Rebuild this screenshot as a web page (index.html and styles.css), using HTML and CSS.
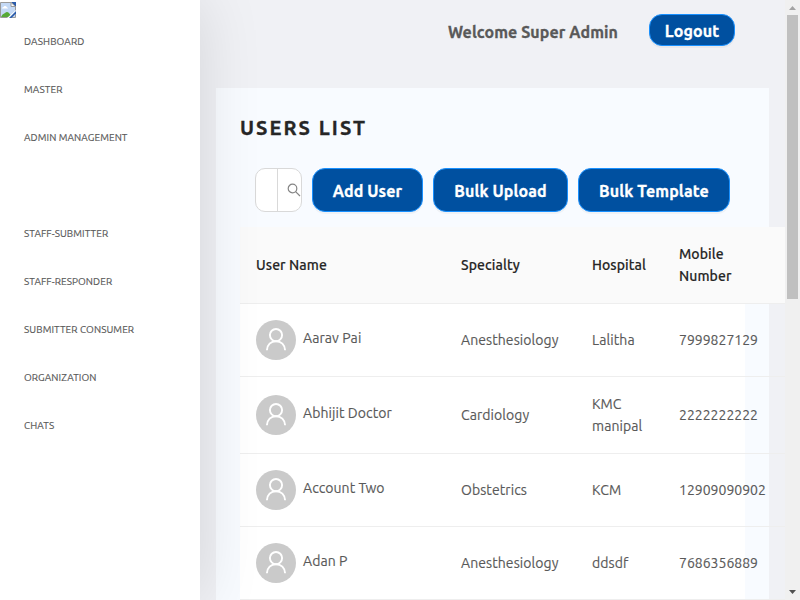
FILE: index.html
```html
<!DOCTYPE html>
<html lang="en">
<head>
<meta charset="utf-8">
<title>Users List</title>
<link rel="stylesheet" href="styles.css">
</head>
<body>
<svg class="defs" aria-hidden="true">
  <symbol id="user" viewBox="0 0 40 40">
    <circle cx="20" cy="20" r="20" fill="#cacaca"/>
    <circle cx="20" cy="15.1" r="6.1" fill="none" stroke="#fff" stroke-width="1.9"/>
    <path d="M10.9 30.2c.2-5.4 4-9 9.1-9s8.900 3.600 9.100 9" fill="none" stroke="#fff" stroke-width="1.9"/>
  </symbol>
</svg>
<div class="app">
  <aside class="sidebar">
    <svg class="logo" viewBox="0 0 16 16">
      <path d="M.5.500h11l4 4v11H.5z" fill="#c4d9f5" stroke="#9a9a9a"/>
      <path d="M2 6.500q0-1.500 1.500-1.500Q4 3.500 5.500 4T7 5.500q1 0 1 1z" fill="#fff"/>
      <path d="M1 15q1-3 4-4 2-2 4 0l3 4z" fill="#56a937"/>
      <path d="M7 16 16 8v3l-5 5z" fill="#fff"/>
      <path d="m9 16 7-7v2.500L11.500 16z" fill="#2b5cab"/>
      <path d="M11 0h5v5z" fill="#2b5cab"/>
      <path d="M11 .5v4h4.500z" fill="#fff" stroke="#9a9a9a"/>
    </svg>
    <nav class="menu">
      <a>DASHBOARD</a>
      <a>MASTER</a>
      <a>ADMIN MANAGEMENT</a>
      <a></a>
      <a>STAFF-SUBMITTER</a>
      <a>STAFF-RESPONDER</a>
      <a>SUBMITTER CONSUMER</a>
      <a>ORGANIZATION</a>
      <a>CHATS</a>
    </nav>
  </aside>
  <main class="main">
    <header class="topbar">
      <span class="welcome">Welcome Super Admin</span>
      <button class="btn logout">Logout</button>
    </header>
    <section class="panel">
      <h1>USERS LIST</h1>
      <div class="tools">
        <div class="search"><span class="field"></span>
          <svg viewBox="0 0 14 14" width="14" height="14"><circle cx="5.500" cy="5.500" r="4.300"/><path d="m8.600 8.600 4.400 4.400"/></svg>
        </div>
        <button class="btn add">Add User</button>
        <button class="btn upload">Bulk Upload</button>
        <button class="btn template">Bulk Template</button>
      </div>
      <div class="table">
        <div class="row head"><div>User Name</div><div>Specialty</div><div>Hospital</div><div>Mobile<br>Number</div></div>
        <div class="row"><div class="user"><svg><use href="#user"/></svg><span>Aarav Pai</span></div><div>Anesthesiology</div><div>Lalitha</div><div class="num">7999827129</div></div>
        <div class="row tall"><div class="user"><svg><use href="#user"/></svg><span>Abhijit Doctor</span></div><div>Cardiology</div><div>KMC<br>manipal</div><div class="num">2222222222</div></div>
        <div class="row"><div class="user"><svg><use href="#user"/></svg><span>Account Two</span></div><div>Obstetrics</div><div>KCM</div><div class="num">12909090902</div></div>
        <div class="row"><div class="user"><svg><use href="#user"/></svg><span>Adan P</span></div><div>Anesthesiology</div><div>ddsdf</div><div class="num">7686356889</div></div>
      </div>
    </section>
  </main>
  <div class="scrollbar">
    <svg viewBox="0 0 15 15"><path d="M4 10h7L7.500 6z" fill="#a3a3a3"/></svg>
    <div class="thumb"></div>
    <svg class="down" viewBox="0 0 15 15"><path d="M4 5h7L7.500 9z" fill="#505050"/></svg>
  </div>
</div>
</body>
</html>
```

FILE: styles.css
```css
* { box-sizing: border-box; }
body {
  margin: 0;
  font: 14px/22px Ubuntu, "Noto Sans", sans-serif;
  letter-spacing: .08px;
  -webkit-text-stroke: .15px;
  color: #595959;
  overflow: hidden;
}
.defs { display: none; }
.app { display: flex; height: 600px; background: #f0f1f5; overflow: hidden; }
.sidebar {
  flex: 0 0 200px;
  position: relative;
  z-index: 2;
  background: #fff;
  box-shadow: 0 0 60px rgba(0, 0, 0, .12);
}
.logo { display: block; width: 16px; height: 16px; margin: 2px 0 0; }
.menu a {
  display: flex;
  align-items: center;
  height: 48px;
  padding-left: 24px;
  font-size: 10px;
  white-space: nowrap;
}
.main { flex: 0 0 585px; overflow: hidden; }
.topbar { display: flex; justify-content: flex-end; height: 88px; padding: 14px 50px 0 0; }
.welcome { margin-right: 31px; padding-top: 7px; font-size: 16px; font-weight: 700; }
.btn {
  height: 44px;
  padding: 2px 0 0;
  border: 1px solid #1890ff;
  border-radius: 13px;
  background: #0050a0;
  box-shadow: 0 2px 0 rgba(0, 0, 0, .035);
  color: #fff;
  font: 700 16px/22px Ubuntu, "Noto Sans", sans-serif;
  letter-spacing: .12px;
  white-space: nowrap;
}
.welcome, .btn, h1 { -webkit-text-stroke: .3px; }
.logout { width: 86px; height: 32px; }
.panel { width: 553px; height: 512px; margin-left: 16px; padding: 24px 24px 0; background: #f8fbff; }
h1 { margin: 0; font-size: 20px; line-height: 32px; letter-spacing: 2.05px; color: #262626; }
.tools { display: flex; gap: 10px; margin: 24px 0 15px 15px; }
.search {
  display: flex;
  align-items: center;
  width: 47px;
  height: 44px;
  border: 1px solid #d9d9d9;
  border-radius: 10px;
  background: #fff;
}
.field { width: 22px; height: 42px; border-right: 1px solid #d9d9d9; }
.search svg { margin-left: 9px; fill: none; stroke: #858585; stroke-width: 1.200; }
.add { width: 111px; }
.upload { width: 135px; }
.template { width: 152px; }
.table { width: 600px; }
.row {
  display: grid;
  grid-template-columns: 205px 131px 87px 177px;
  align-items: center;
  height: 73px;
  border-bottom: 1px solid #eee;
  background: linear-gradient(#fff, #fff) 0 0 / 505px 100% no-repeat;
}
.row > div { padding-left: 16px; white-space: nowrap; }
.row .num { letter-spacing: 0; }
.row.tall { height: 77px; }
.row.head { height: 77px; background: #fafafa; color: #262626; font-weight: 500; }
.row .user { display: flex; align-items: center; gap: 7px; }
.user svg { width: 40px; height: 40px; }
.user span { margin-top: -4px; }
.scrollbar { display: flex; flex-direction: column; width: 15px; background: #f0f0f0; }
.scrollbar svg { width: 15px; height: 15px; }
.thumb { width: 11px; height: 284px; margin-left: 2px; background: #c0c0c0; }
.scrollbar .down { margin-top: auto; }
```
